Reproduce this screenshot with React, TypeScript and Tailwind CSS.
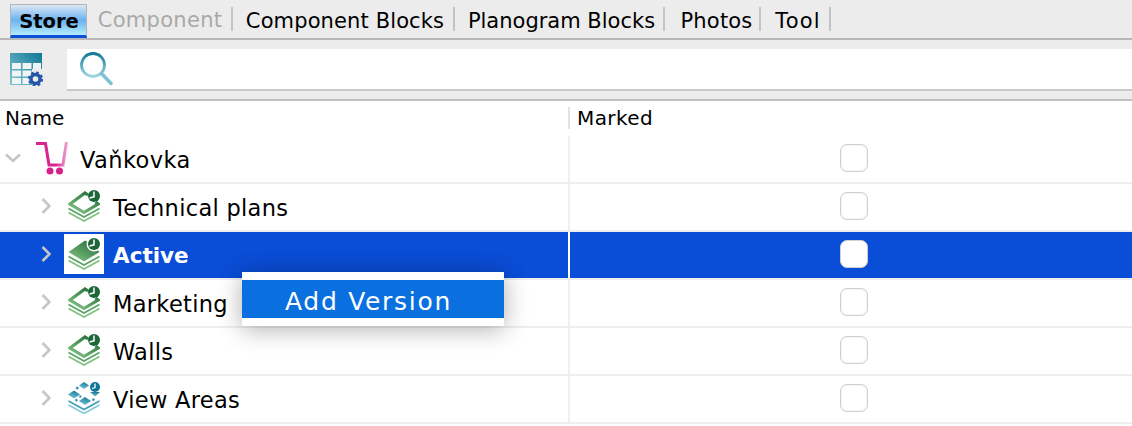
import React from "react";

const font = "font-['DejaVu_Sans','Liberation_Sans',sans-serif]";

function StackIcon({ filled = false, id }: { filled?: boolean; id: string }) {
  return (
    <svg width="32" height="32" viewBox="0 0 32 32" fill="none">
      <defs>
        <linearGradient id={id} x1="0.9" y1="0" x2="0.1" y2="1">
          <stop offset="0" stopColor="#1f6a3a" />
          <stop offset="1" stopColor="#86c583" />
        </linearGradient>
      </defs>
      {filled ? (
        <path d="M0.500 14L17 2.500L24 6.500L31.500 14L16 23.500Z" fill={`url(#${id})`} />
      ) : (
        <path d="M20 5L17 3L2 14L16 22.500L30 14L27.500 12" stroke={`url(#${id})`} strokeWidth="3.200" />
      )}
      <path d="M0.500 18.500L16 27L31.500 18.500" stroke="#57a563" strokeWidth="1.700" />
      <path d="M0.500 22.500L16 31L31.500 22.500" stroke="#7fc07f" strokeWidth="1.700" />
      {filled && <circle cx="26" cy="6" r="7.500" fill="#ffffff" />}
      <circle cx="26" cy="6" r="6" fill="#1c6638" />
      <path d="M26 1.500V6.800L21.500 8" stroke="#fff" strokeWidth="1.500" />
    </svg>
  );
}

function AreasIcon() {
  return (
    <svg width="32" height="32" viewBox="0 0 32 32" fill="none">
      <defs>
        <linearGradient id="areas" x1="0.7" y1="0" x2="0.3" y2="1">
          <stop offset="0" stopColor="#0f7896" />
          <stop offset="1" stopColor="#7cc4d8" />
        </linearGradient>
      </defs>
      <g fill="url(#areas)">
        <path d="M16 0L21 3.500L16 7L11 3.500Z" />
        <path d="M6 8.500L12 12.500L6 16.500L0 12.500Z" />
        <path d="M17 15L23 19L17 23L11 19Z" />
        <path d="M22 10H32L27 14.500Z" />
        <rect x="7.800" y="4.800" width="2.600" height="2.600" transform="rotate(45 9.100 6.100)" />
        <rect x="11" y="13.500" width="2.200" height="2.200" transform="rotate(45 12.100 14.600)" />
        <rect x="7" y="17" width="2.400" height="2.400" transform="rotate(45 8.200 18.200)" />
        <rect x="24" y="16.500" width="2.400" height="2.400" transform="rotate(45 25.200 17.700)" />
      </g>
      <path d="M0.500 19L16 27.500L31.500 19" stroke="#3f9db8" strokeWidth="1.600" />
      <path d="M0.500 23L16 31.500L31.500 23" stroke="#86c9da" strokeWidth="1.600" />
      <circle cx="27" cy="5" r="5" fill="#0f7896" />
      <path d="M27 1.500V5.500L24 6.500" stroke="#fff" strokeWidth="1.300" />
    </svg>
  );
}

function CartIcon() {
  return (
    <svg width="32" height="34" viewBox="0 0 32 34" fill="none">
      <defs>
        <linearGradient id="cart" x1="0" y1="0" x2="1" y2="0">
          <stop offset="0" stopColor="#d9248f" />
          <stop offset="0.65" stopColor="#d9248f" />
          <stop offset="1" stopColor="#eba0cc" />
        </linearGradient>
      </defs>
      <path d="M0 2.500H9.500L13 24H27L30.500 1" stroke="url(#cart)" strokeWidth="3" />
      <circle cx="14" cy="30" r="3.500" fill="#d81f8c" />
      <circle cx="23.500" cy="30" r="3.500" fill="#d81f8c" />
    </svg>
  );
}

function TableIcon() {
  return (
    <svg width="33" height="33" viewBox="0 0 33 33" fill="none">
      <defs>
        <linearGradient id="tbl" x1="1" y1="0" x2="0" y2="1">
          <stop offset="0" stopColor="#0f7895" />
          <stop offset="1" stopColor="#86c6d3" />
        </linearGradient>
      </defs>
      <path d="M0 0H32V16H22V32H0Z" fill="url(#tbl)" />
      <g fill="#f0f4f5">
        <rect x="2" y="10" width="9" height="6" />
        <rect x="12.500" y="10" width="9" height="6" />
        <rect x="23" y="10" width="8" height="6" />
        <rect x="2" y="17.500" width="9" height="6" />
        <rect x="12.500" y="17.500" width="9" height="6" />
        <rect x="2" y="25" width="9" height="6" />
        <rect x="12.500" y="25" width="7" height="6" />
      </g>
      <circle cx="25.500" cy="26" r="4.500" stroke="#2458a8" strokeWidth="3.400" />
      <circle cx="25.500" cy="26" r="6.400" stroke="#2458a8" strokeWidth="2.400" strokeDasharray="2.600 2.400" />
    </svg>
  );
}

function SearchIcon() {
  return (
    <svg width="33" height="34" viewBox="0 0 33 34" fill="none">
      <defs>
        <linearGradient id="srch" x1="0.5" y1="0" x2="0.5" y2="1">
          <stop offset="0" stopColor="#107a97" />
          <stop offset="1" stopColor="#9fd6e0" />
        </linearGradient>
      </defs>
      <circle cx="13" cy="13" r="11.500" stroke="url(#srch)" strokeWidth="2.800" />
      <path d="M21.500 21.500L31 31.500" stroke="#7cc2d2" strokeWidth="3.400" strokeLinecap="round" />
    </svg>
  );
}

function Chevron({ open = false }: { open?: boolean }) {
  return open ? (
    <svg width="16" height="10" viewBox="0 0 16 10" fill="none">
      <path d="M1 1.500L8 8L15 1.500" stroke="#c6c6c6" strokeWidth="2.600" />
    </svg>
  ) : (
    <svg width="10" height="16" viewBox="0 0 10 16" fill="none">
      <path d="M1.500 1L8.500 8L1.500 15" stroke="#c6c6c6" strokeWidth="2.600" />
    </svg>
  );
}

const tabs = [
  { label: "Component Blocks", cls: "w-[222px] pl-[4px] tracking-[0.12px]" },
  { label: "Planogram Blocks", cls: "w-[210px] pl-[5px] tracking-[0px]" },
  { label: "Photos", cls: "w-[96px] pl-[9px] tracking-[0.2px]" },
  { label: "Tool", cls: "w-[70px] pl-[6px] tracking-[1.200px]" },
];

function Row({
  label,
  icon,
  selected = false,
}: {
  label: string;
  icon: React.ReactNode;
  selected?: boolean;
}) {
  return (
    <div className={`flex h-[48px] border-b-2 border-[#eeeeee] ${selected ? "bg-[#0a4dd6]" : "bg-white"}`}>
      <div className="flex w-[568px] items-center pb-[2px] pl-[41px]">
        <div className="flex w-[23px] shrink-0 items-center">
          <Chevron />
        </div>
        <div className={`flex h-[40px] w-[40px] shrink-0 items-center justify-center ${selected ? "bg-white" : ""}`}>
          {icon}
        </div>
        <span
          className={`ml-[9px] ${selected ? "mt-[4px] text-[21.500px] font-bold text-white" : "mt-[6px] text-[22.500px] tracking-[0.3px] text-black"}`}
        >
          {label}
        </span>
      </div>
      <div className={`h-full w-[2px] ${selected ? "bg-white" : "bg-[#f0f0f0]"}`} />
      <div className="flex flex-1 items-center pb-[2px] pl-[270px]">
        <div
          className={`h-[28px] w-[28px] rounded-[7px] border border-[#cfcfcf] ${selected ? "bg-white" : "bg-white shadow-[inset_0_0_2px_#dddddd]"}`}
        />
      </div>
    </div>
  );
}

export default function App() {
  return (
    <div className={`relative h-[426px] w-[1132px] overflow-hidden bg-white ${font}`}>
      <div className="flex h-[40px] items-stretch border-b-2 border-[#b8b8b8] bg-[#ececec] pl-[10px]">
        <div className="mt-[4px] flex w-[77px] items-center justify-center border-x border-t border-[#b5b5b5] border-b-[3px] border-b-[#0a4fd8] bg-gradient-to-b from-[#dbe6f5] via-[#6ab2ef] to-[#b5ecfb] pl-[1px] pt-[3px] text-[19.500px] font-bold text-black">
          Store
        </div>
        <div className="my-[7px] flex w-[146px] items-center justify-center border-r-2 border-[#c4c4c4] pl-[2px] pt-[4px] text-[21px] tracking-[0.3px] text-[#a9a9a9]">
          Component
        </div>
        {tabs.map((t) => (
          <div
            key={t.label}
            className={`my-[7px] flex ${t.cls} items-center justify-center border-r-2 border-[#c4c4c4] pt-[5px] text-[21px] text-black`}
          >
            {t.label}
          </div>
        ))}
      </div>
      <div className="flex h-[61px] items-center border-b-2 border-[#c0c0c0] bg-[#ececec] pl-[10px]">
        <TableIcon />
        <div className="ml-[24px] flex h-[42px] flex-1 items-center border-b-2 border-[#c8c8c8] bg-white pl-[13px]">
          <SearchIcon />
        </div>
      </div>
      <div className="flex h-[35px] bg-white pb-[1px] text-[20px] tracking-[0.1px] text-black">
        <div className="flex w-[568px] items-center pl-[5px]">Name</div>
        <div className="my-[6px] w-[2px] bg-[#e2e2e2]" />
        <div className="flex flex-1 items-center pl-[7px] tracking-[0.4px]">Marked</div>
      </div>
      <div className="flex h-[48px] border-b-2 border-[#eeeeee] bg-white">
        <div className="flex w-[568px] items-center pb-[2px] pl-[5px]">
          <div className="flex w-[31px] shrink-0 items-center">
            <Chevron open />
          </div>
          <CartIcon />
          <span className="ml-[12px] mt-[6px] text-[22.500px] tracking-[0.4px] text-black">Vaňkovka</span>
        </div>
        <div className="h-full w-[2px] bg-[#f0f0f0]" />
        <div className="flex flex-1 items-center pb-[2px] pl-[270px]">
          <div className="h-[28px] w-[28px] rounded-[7px] border border-[#cfcfcf] bg-white shadow-[inset_0_0_2px_#dddddd]" />
        </div>
      </div>
      <Row label="Technical plans" icon={<StackIcon id="s1" />} />
      <Row label="Active" icon={<StackIcon id="s2" filled />} selected />
      <Row label="Marketing" icon={<StackIcon id="s3" />} />
      <Row label="Walls" icon={<StackIcon id="s4" />} />
      <Row label="View Areas" icon={<AreasIcon />} />
      <div className="absolute left-[242px] top-[272px] w-[262px] bg-white py-[8px] shadow-[0_3px_24px_rgba(0,0,0,0.32)]">
        <div className="flex h-[38px] items-center bg-[#0a6fdf] pl-[43px] pt-[5px] text-[25px] tracking-[1.700px] text-white">
          Add Version
        </div>
      </div>
    </div>
  );
}
